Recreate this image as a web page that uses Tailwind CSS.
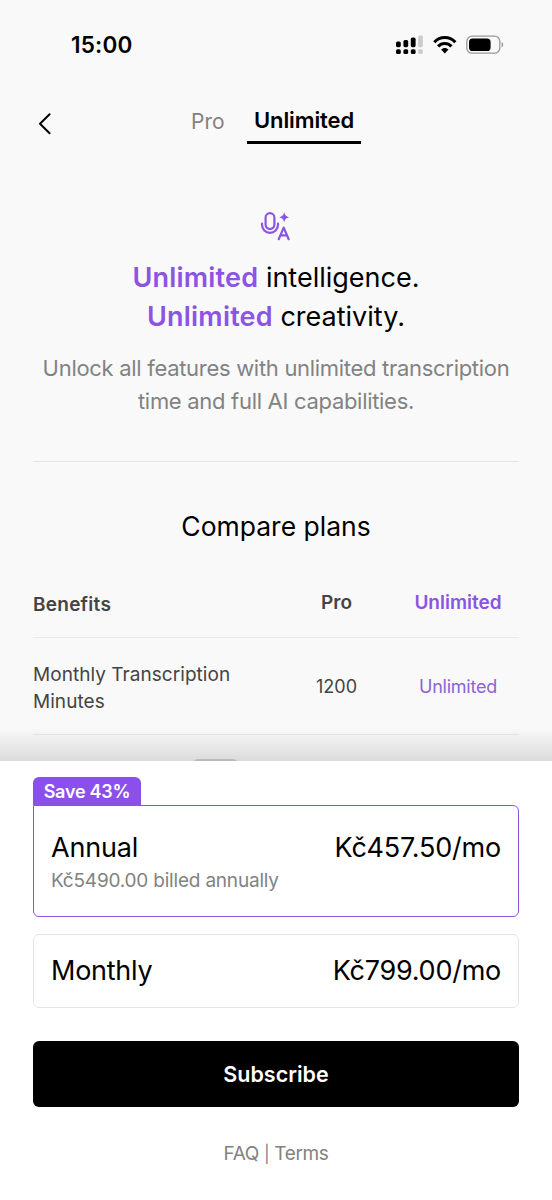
<!DOCTYPE html>
<html lang="en">
<head>
<meta charset="utf-8">
<title>Compare plans</title>
<script src="https://cdn.jsdelivr.net/npm/@tailwindcss/browser@4"></script>
</head>
<body class="bg-[#f9f9f9]">
<div class="relative flex h-[1200px] w-[552px] flex-col overflow-hidden bg-[#f9f9f9] font-['Inter','Liberation_Sans',sans-serif] whitespace-nowrap text-black">
  <header class="flex h-[90px] items-center justify-between pr-[48px] pl-[71px]">
    <span class="text-[22.5px] leading-[30px] font-semibold tracking-[0.2px]">15:00</span>
    <div class="flex items-center">
      <svg class="h-[20px] w-[28px]" viewBox="0 0 28 20">
        <g fill="#000"><rect x="0" y="6.4" width="4.8" height="5.8" rx="1.6"/><rect x="7.4" y="5" width="4.8" height="7.2" rx="1.6"/><rect x="14.8" y="2.6" width="4.8" height="9.6" rx="1.6"/><rect x="0" y="14.2" width="4.8" height="4.8" rx="1.6"/><rect x="7.4" y="14.2" width="4.8" height="4.8" rx="1.6"/><rect x="14.8" y="14.2" width="4.8" height="4.8" rx="1.6"/></g>
        <g fill="#ccc"><rect x="22.2" y="0.4" width="4.6" height="11.8" rx="1.4"/><rect x="22.2" y="14.2" width="4.6" height="4.8" rx="1.4"/></g>
      </svg>
      <svg class="ml-[9px] h-[20px] w-[24px]" viewBox="0 0 24 20" fill="none" stroke="#000" stroke-width="3.1">
        <path d="M1.3 7.2C7 1 16.6 1 22.3 7.2"/><path d="M5.1 11.4c3.7-3.9 9.7-3.9 13.4 0"/><path d="M8.1 14.6c2.1-2.1 5.3-2.1 7.4 0L11.8 18.4z" fill="#000" stroke="none"/>
      </svg>
      <svg class="ml-[9px] h-[20px] w-[38px]" viewBox="0 0 38 20">
        <rect x="0.8" y="1.2" width="33" height="17" rx="5.2" fill="none" stroke="#999" stroke-width="1.3"/><rect x="3" y="3.4" width="21.6" height="12.6" rx="3.6"/><path d="M35.6 7v5.4c2.2-.9 2.2-4.5 0-5.4z" fill="#999"/>
      </svg>
    </div>
  </header>

  <nav class="flex h-[60px] items-start pl-[36px]">
    <svg class="mt-[22px] h-[24px] w-[16px]" viewBox="0 0 16 24" fill="none" stroke="#000" stroke-width="2" stroke-linecap="round" stroke-linejoin="round"><path d="M13.6 2.2 4 11.7l9.6 9.6"/></svg>
    <span class="mt-[17px] ml-[139px] w-[34px] text-[21px] leading-[30px] text-[#828282]">Pro</span>
    <span class="mt-[15px] ml-[22px] flex h-[39px] w-[114px] justify-center border-b-[3px] border-black text-[22px] leading-[31px] font-semibold tracking-[-0.1px]">Unlimited</span>
  </nav>

  <main class="px-[33px]">
    <section class="flex h-[312px] flex-col items-center border-b border-[#e6e6e6] pt-[60px] text-center">
      <svg class="h-[32px] w-[32px]" viewBox="0 0 32 32" fill="none" stroke="#8b54e2" stroke-width="2.2" stroke-linecap="round" stroke-linejoin="round">
        <rect x="5.6" y="3.2" width="8.8" height="15.8" rx="4.4"/><path d="M2 13.6v1.2a8 8 0 0 0 16 0v-1.2"/><path d="m18.7 29.2 5-11.6 5 11.6M20.5 25.4h6.6"/><path fill="#8b54e2" stroke="none" d="M24.2 2c.8 3.4 1.8 4.4 5.2 5.2-3.4.8-4.4 1.8-5.2 5.2-.8-3.4-1.8-4.4-5.2-5.2 3.4-.8 4.4-1.8 5.2-5.2z"/>
      </svg>
      <h1 class="mt-[17px] text-[27px] leading-[38.5px]"><span class="font-semibold tracking-[0.2px] text-[#8b54e2]">Unlimited</span> intelligence.<br><span class="font-semibold tracking-[0.2px] text-[#8b54e2]">Unlimited</span> creativity.</h1>
      <p class="mt-[16px] text-[22px] leading-[33px] tracking-[-0.3px] text-[#828282]">Unlock all features with unlimited transcription<br>time and full AI capabilities.</p>
    </section>

    <h2 class="mt-[44px] text-center text-[26.5px] leading-[40px]">Compare plans</h2>

    <section class="mt-[22px] text-[19px] text-[#444]">
      <div class="grid h-[70px] grid-cols-[243px_121px_122px] items-center border-b border-[#ebebeb] font-semibold">
        <span class="pt-[5px] tracking-[0.25px]">Benefits</span><span class="pt-[2px] text-center">Pro</span><span class="pt-[2px] text-center text-[#8b54e2]">Unlimited</span>
      </div>
      <div class="grid h-[97px] grid-cols-[243px_121px_122px] items-center border-b border-[#e6e6e6]">
        <span class="pt-[4px] leading-[27.5px] tracking-[0.05px]">Monthly Transcription<br>Minutes</span><span class="text-center text-[18px]">1200</span><span class="text-center text-[18px] tracking-[-0.25px] text-[#8e62d6]">Unlimited</span>
      </div>
    </section>
  </main>

  <div class="absolute inset-x-0 top-[728px] h-[33px] bg-linear-to-b from-black/0 to-black/12"></div>
  <div class="absolute top-[759px] left-[193px] h-[10px] w-[45px] rounded-[5px] border-2 border-[#bbb]"></div>

  <footer class="absolute inset-x-0 top-[761px] flex h-[439px] flex-col bg-white px-[33px] pt-[16px]">
    <div class="flex h-[28px] w-[108px] items-center justify-center rounded-t-[6px] bg-[#8b50ea] text-[18px] font-semibold tracking-[-0.25px] text-white">Save 43%</div>
    <div class="flex h-[112px] justify-between rounded-[6px] rounded-tl-none border-[1.5px] border-[#8b54d8] px-[17px] pt-[23px] text-[27px] leading-[38px] tracking-[-0.2px]">
      <div><div>Annual</div><div class="text-[19px] leading-[28px] text-[#828282]">Kč5490.00 billed annually</div></div>
      <span>Kč457.50/mo</span>
    </div>
    <div class="mt-[17px] flex h-[74px] items-center justify-between rounded-[6px] border border-[#e6e6e6] px-[17px] text-[27px] leading-[38px] tracking-[-0.25px]">
      <span>Monthly</span><span>Kč799.00/mo</span>
    </div>
    <button class="mt-[33px] h-[66px] rounded-[6px] bg-black text-[21.5px] font-semibold text-white">Subscribe</button>
    <div class="mt-[32px] text-center text-[19px] leading-[30px] tracking-[-0.35px] text-[#828282]">FAQ <span class="text-[17px]">|</span> Terms</div>
  </footer>
</div>
</body>
</html>
